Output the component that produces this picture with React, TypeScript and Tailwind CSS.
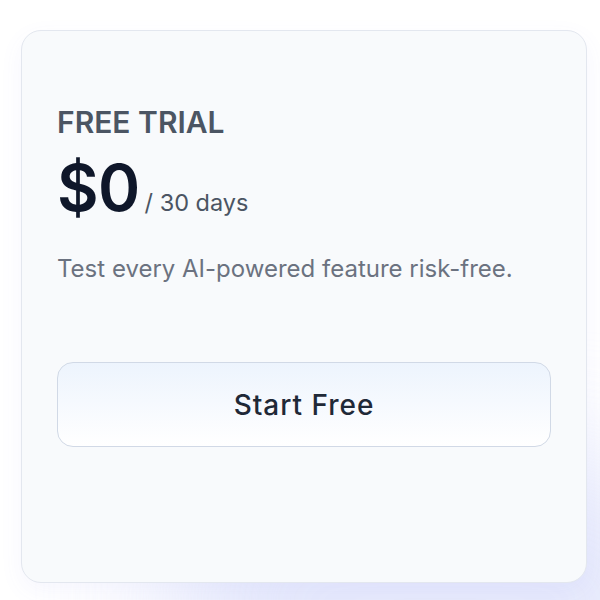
import React from "react";

export default function App() {
  return (
    <div className="relative w-[600px] h-[600px] overflow-hidden bg-white" style={{ fontFamily: "Inter, 'Noto Sans', sans-serif" }}>
      <div className="absolute right-[-120px] bottom-[-140px] w-[560px] h-[280px] rounded-full bg-[#e0e4fb] blur-[60px] opacity-80" />
      <div className="relative ml-[21px] mt-[30px] w-[566px] h-[553px] rounded-[20px] border border-[#e3e7ef] bg-[#f8fafc] px-[35px] pt-[73px] shadow-[0_8px_24px_rgba(99,102,241,0.06)]">
        <div className="text-[30px] leading-[36px] font-semibold text-[#4b5563]">FREE TRIAL</div>
        <div className="mt-[16px] flex items-baseline">
          <span className="text-[64px] leading-[64px] font-semibold tracking-[-0.01em] text-[#0f172a]">$0</span>
          <span className="ml-[5px] text-[23.5px] leading-[1.5] text-[#4b5563]">/ 30 days</span>
        </div>
        <p className="mt-[33px] text-[24px] leading-[32px] text-[#6b7280]">Test every AI-powered feature risk-free.</p>
        <button className="mt-[77px] w-full h-[85px] rounded-[16px] border border-[#d1d9e6] bg-gradient-to-b from-[#edf4fd] to-white text-[28px] font-medium tracking-[0.035em] text-[#1f2937]">
          Start Free
        </button>
      </div>
    </div>
  );
}
